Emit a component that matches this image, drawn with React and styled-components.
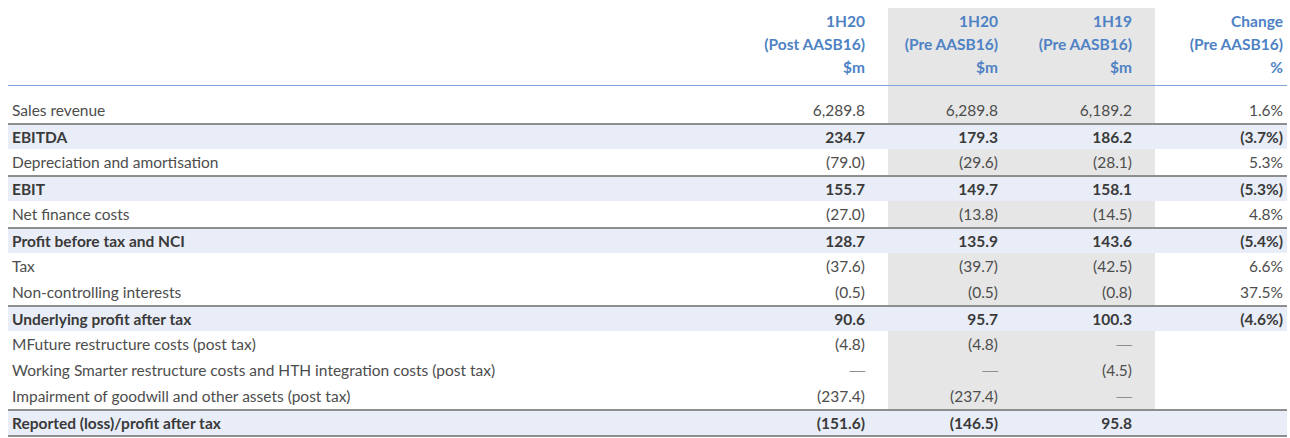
import React from "react";
import styled, { createGlobalStyle } from "styled-components";

const GlobalStyle = createGlobalStyle`
  html, body {
    margin: 0;
    background: #ffffff;
  }
  body {
    font-family: Lato, "Open Sans", "Liberation Sans", sans-serif;
    font-size: 15.5px;
    color: #454545;
  }
`;

////// STYLING ////////
const Page = styled.div`
  padding: 8px 3px 0 8px;
`;

const Grid = styled.div`
  display: grid;
  grid-template-columns: 1fr 133px 133px 134px 132px;
`;

const HeadRow = styled(Grid)`
  border-bottom: 1px solid #7fa5d8;
`;

const HeadCell = styled.div`
  background: ${(p) => (p.shaded ? "#e6e6e6" : "transparent")};
  padding: 2px ${(p) => (p.last ? "4px" : "23px")} 6px 0;
  text-align: right;
  color: #4e82c4;
  font-weight: 700;
  line-height: 23px;
`;

const Spacer = styled(Grid)`
  height: 11px;
`;

const Blank = styled.div`
  background: ${(p) => (p.shaded ? "#e6e6e6" : "transparent")};
`;

const Row = styled(Grid)`
  height: ${(p) => (p.bold ? "24px" : "26px")};
  background: ${(p) => (p.bold ? "#e8edf7" : "transparent")};
  border-top: ${(p) => (p.bold ? "2px solid #8e8e8e" : "none")};
  border-bottom: ${(p) => (p.closing ? "2px solid #8e8e8e" : "none")};
  font-weight: ${(p) => (p.bold ? 700 : 400)};
  color: ${(p) => (p.bold ? "#3a3a3a" : "#4d4d4d")};
`;

const Label = styled.div`
  display: flex;
  align-items: center;
  padding-left: 4px;
  white-space: nowrap;
`;

const Value = styled.div`
  display: flex;
  align-items: center;
  justify-content: flex-end;
  padding-right: ${(p) => (p.last ? "4px" : "23px")};
  background: ${(p) => (p.shaded ? "#e6e6e6" : "transparent")};
`;

const Dash = styled.span`
  font-family: "Liberation Sans", sans-serif;
  color: #8f8f8f;
`;

const headers = [
  ["1H20", "(Post AASB16)", "$m"],
  ["1H20", "(Pre AASB16)", "$m"],
  ["1H19", "(Pre AASB16)", "$m"],
  ["Change", "(Pre AASB16)", "%"],
];

const rows = [
  { label: "Sales revenue", values: ["6,289.8", "6,289.8", "6,189.2", "1.6%"] },
  { label: "EBITDA", bold: true, values: ["234.7", "179.3", "186.2", "(3.7%)"] },
  { label: "Depreciation and amortisation", values: ["(79.0)", "(29.6)", "(28.1)", "5.3%"] },
  { label: "EBIT", bold: true, values: ["155.7", "149.7", "158.1", "(5.3%)"] },
  { label: "Net finance costs", values: ["(27.0)", "(13.8)", "(14.5)", "4.8%"] },
  { label: "Profit before tax and NCI", bold: true, values: ["128.7", "135.9", "143.6", "(5.4%)"] },
  { label: "Tax", values: ["(37.6)", "(39.7)", "(42.5)", "6.6%"] },
  { label: "Non-controlling interests", values: ["(0.5)", "(0.5)", "(0.8)", "37.5%"] },
  { label: "Underlying profit after tax", bold: true, values: ["90.6", "95.7", "100.3", "(4.6%)"] },
  { label: "MFuture restructure costs (post tax)", values: ["(4.8)", "(4.8)", "—", ""] },
  {
    label: "Working Smarter restructure costs and HTH integration costs (post tax)",
    values: ["—", "—", "(4.5)", ""],
  },
  { label: "Impairment of goodwill and other assets (post tax)", values: ["(237.4)", "(237.4)", "—", ""] },
  { label: "Reported (loss)/profit after tax", bold: true, closing: true, values: ["(151.6)", "(146.5)", "95.8", ""] },
];

// pre-AASB16 comparison columns carry the grey band
const isShaded = (i) => i === 1 || i === 2;

export default function App() {
  return (
    <Page>
      <GlobalStyle />
      <HeadRow>
        <div />
        {headers.map((lines, i) => (
          <HeadCell key={i} shaded={isShaded(i)} last={i === 3}>
            {lines.map((l) => (
              <div key={l}>{l}</div>
            ))}
          </HeadCell>
        ))}
      </HeadRow>
      <Spacer>
        <Blank />
        <Blank />
        <Blank shaded />
        <Blank shaded />
        <Blank />
      </Spacer>
      {rows.map((r) => (
        <Row key={r.label} bold={r.bold} closing={r.closing}>
          <Label>{r.label}</Label>
          {r.values.map((v, i) => (
            <Value key={i} shaded={!r.bold && isShaded(i)} last={i === 3}>
              {v === "—" ? <Dash>{v}</Dash> : v}
            </Value>
          ))}
        </Row>
      ))}
    </Page>
  );
}
